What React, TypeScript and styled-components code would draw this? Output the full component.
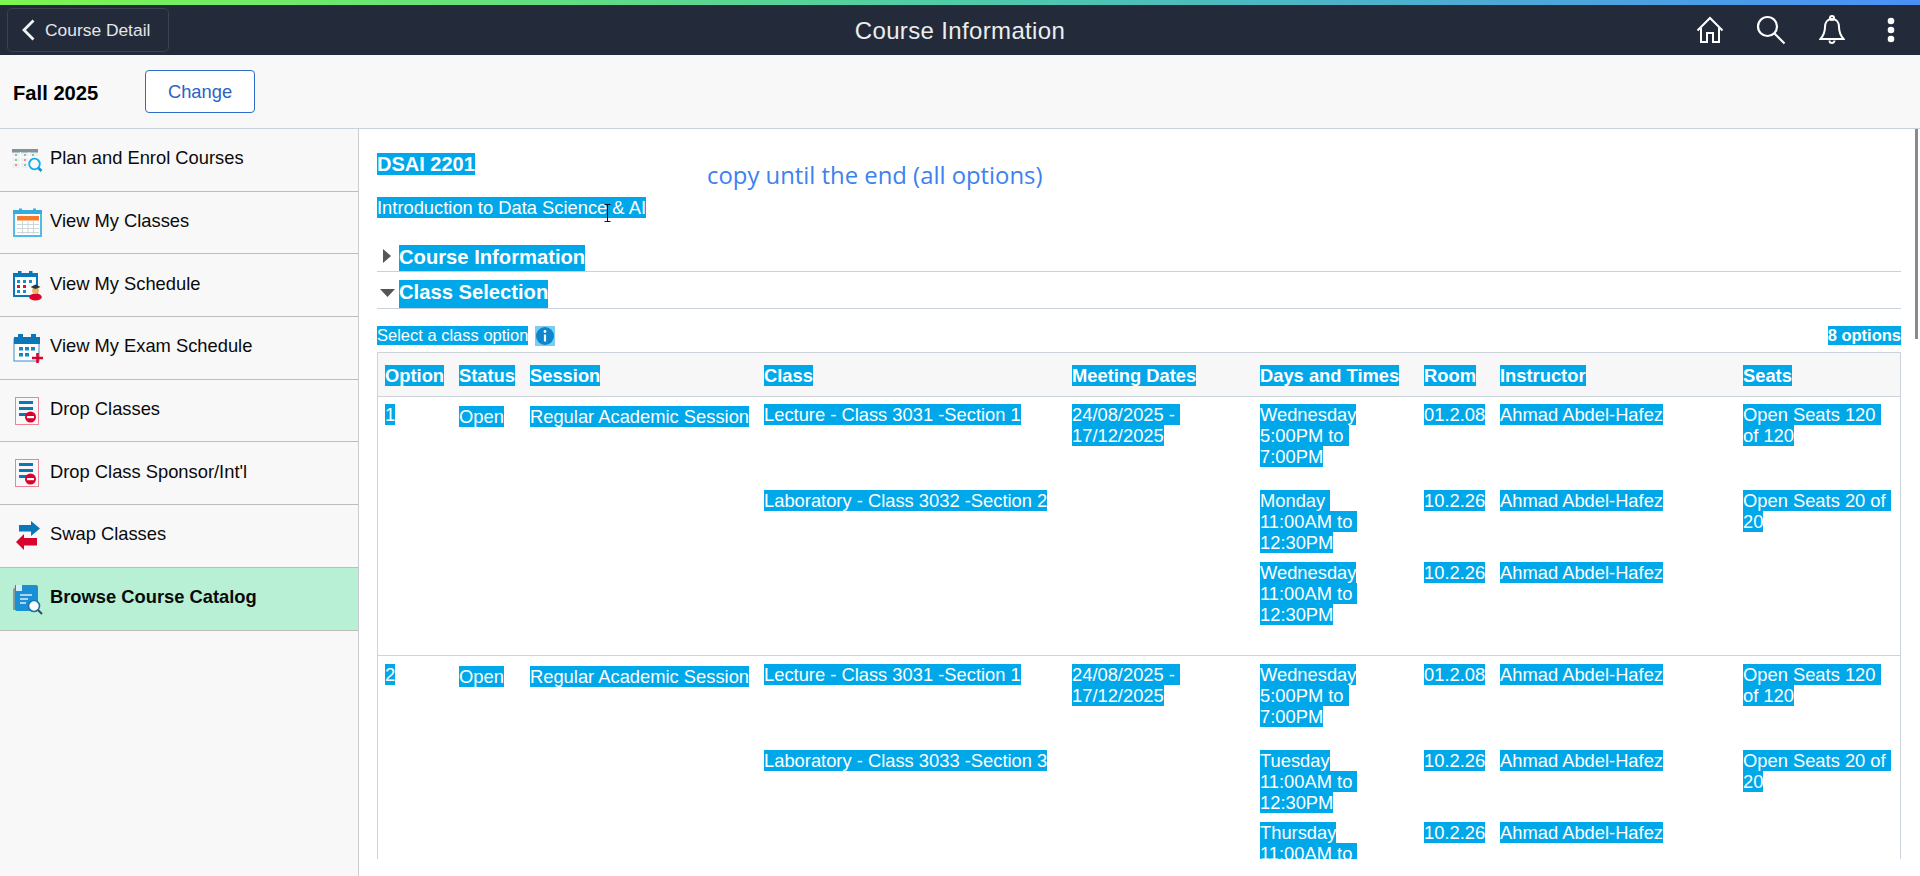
import React from "react";
import styled, { createGlobalStyle } from "styled-components";

const Global = createGlobalStyle`
  html, body { margin: 0; padding: 0; height: 100%; overflow: hidden; background: #fff; }
  body { font-family: "Liberation Sans", Arial, sans-serif; }
  * { box-sizing: border-box; }
`;

const Page = styled.div`
  width: 1920px; height: 876px; display: flex; flex-direction: column; overflow: hidden;
`;
const Accent = styled.div`
  height: 5px; flex: none;
  background: linear-gradient(90deg, #7cf64f 0%, #4ecba8 50%, #4a90f8 100%);
`;
const Header = styled.header`
  height: 50px; flex: none; background: #232b3a;
  display: grid; grid-template-columns: 1fr auto 1fr; align-items: center;
`;
const BackButton = styled.button`
  justify-self: start; margin-left: 7px; width: 162px; height: 44px;
  display: flex; align-items: center; gap: 10px; padding: 0 0 0 13px;
  background: transparent; border: 1px solid #3b4351; border-radius: 5px;
  color: #e4e6e9; font: 17.4px "Liberation Sans", Arial, sans-serif;
`;
const Title = styled.h1`
  margin: 0; padding-top: 1px; font: 400 24px "Liberation Sans", Arial, sans-serif; letter-spacing: .35px; color: #eceded;
`;
const HeaderIcons = styled.div`
  justify-self: end; display: flex; align-items: center;
`;
const HeaderIcon = styled.span<{ $w: number }>`
  display: flex; justify-content: center; width: ${p => p.$w}px;
`;
const SubBar = styled.div`
  height: 74px; flex: none; background: #f8f8f8; border-bottom: 1px solid #c9d2dc;
  display: flex; align-items: center; padding-left: 13px;
`;
const Term = styled.div`
  width: 132px; font-weight: 700; font-size: 20.2px; color: #000; margin-top: 4px;
`;
const ChangeButton = styled.button`
  width: 110px; height: 43px; background: #fff; border: 1px solid #2f6bc9; border-radius: 4px;
  color: #2d62c4; font: 18.33px "Liberation Sans", Arial, sans-serif; padding: 0;
`;
const Body = styled.div`
  flex: 1; display: flex; min-height: 0; position: relative;
`;
const Sidebar = styled.nav`
  width: 359px; flex: none; background: #f8f8f8; border-right: 1px solid #c9ccd0;
`;
const NavRow = styled.div<{ $active?: boolean }>`
  height: 62.7px; display: flex; align-items: center; padding-left: 11px; gap: 7px;
  border-bottom: 1px solid #bdbdbd;
  background: ${p => (p.$active ? "#b7f0d5" : "transparent")};
  font-size: 18.33px; font-weight: ${p => (p.$active ? 700 : 400)}; color: #0a0a0a;
`;
const NavLabel = styled.span`
  margin-bottom: 3px;
`;
const Main = styled.main`
  flex: 1; height: 730px; overflow: hidden; padding: 24px 19px 0 18px; position: relative; background: #fff;
`;
const Mark = styled.span`
  background: #00a8ea; color: #fff; white-space: pre;
`;
const CourseCode = styled.div`
  font-size: 20px; font-weight: 700; line-height: 23px;
`;
const CourseName = styled.div`
  position: relative; font-size: 18.33px; line-height: 21px; margin-top: 21px; margin-bottom: 27px;
`;
const IBeam = styled.svg`
  position: absolute; left: 227px; top: 7px;
`;
const Note = styled.div`
  position: absolute; left: 348px; top: 29px;
  font: 23.87px "Open Sans", sans-serif; color: #3b82f0; white-space: nowrap;
`;
const SectionHead = styled.div<{ $h: number; $mb: number }>`
  height: ${p => p.$h}px; margin-bottom: ${p => p.$mb}px; border-bottom: 1px solid #c9d2dc;
  display: flex; font-size: 20.2px; font-weight: 700; line-height: 24px;
`;
const Caret = styled.span`
  width: 22px; flex: none; display: flex; justify-content: center; align-items: flex-start;
  padding: 4px 2px 0 0;
`;
const InfoLine = styled.div`
  display: flex; justify-content: space-between; align-items: flex-start; height: 26px;
  font-size: 16.5px; line-height: 19px;
`;
const InfoLeft = styled.span`
  display: flex; align-items: flex-start; gap: 7px;
`;
const InfoChip = styled.span`
  display: flex; background: #7ccdf0; width: 20px; height: 20px;
`;
const Strong = styled(Mark)`
  font-weight: 700;
`;
const Table = styled.div`
  border: 1px solid #ccd3db; border-bottom: none;
`;
const cols = "74px 71px 234px 308px 188px 164px 76px 243px 1fr";
const HeadRow = styled.div`
  display: grid; grid-template-columns: ${cols}; padding: 12px 0 0 7px; height: 44px;
  background: #f7f7f7; border-bottom: 1px solid #ccd3db;
  font-size: 18.33px; font-weight: 700; line-height: 21px;
`;
const OptionRow = styled.div<{ $pt: number }>`
  display: grid; grid-template-columns: ${cols}; grid-template-rows: 86px 72px auto;
  padding: ${p => p.$pt}px 0 30px 7px;
  font-size: 18.33px; line-height: 21px;
  & + & { border-top: 1px solid #ccd3db; }
`;
const Cell = styled.div<{ $col: number; $row?: number; $low?: boolean }>`
  grid-column: ${p => p.$col};
  grid-row: ${p => p.$row ?? 1};
  margin-top: ${p => (p.$low ? 2 : 0)}px;
`;
const Thumb = styled.div`
  position: absolute; right: 2px; top: 0; width: 3px; height: 210px; background: #8a8a8a;
`;

const T = (p: { children: string; col: number; row?: number; low?: boolean }) => (
  <Cell $col={p.col} $row={p.row} $low={p.low}><Mark>{p.children}</Mark></Cell>
);

const Plan = () => (
  <svg width="32" height="32" viewBox="0 0 32 32">
    <rect x="1" y="5" width="26" height="19" fill="#eef0f2" />
    <rect x="1" y="5" width="26" height="3.5" fill="#84909c" />
    <path d="M9.5 8v16M18 8v16" stroke="#fff" />
    <path d="M1 13h26M1 18h26" stroke="#fff" />
    <path d="M4 11h2M13 11h2M21 11h2M4 16h2" stroke="#5cc46a" strokeWidth="1.4" />
    <path d="M13 16h2M4 21h2" stroke="#f08aa8" strokeWidth="2" />
    <path d="M13 21h2" stroke="#5cc46a" strokeWidth="1.4" />
    <circle cx="23.5" cy="20" r="5.3" fill="#f8f8f8" stroke="#12aef0" strokeWidth="1.8" />
    <path d="M27.5 24l3 3" stroke="#0a9ad8" strokeWidth="2.6" />
  </svg>
);
const Classes = () => (
  <svg width="32" height="32" viewBox="0 0 32 32">
    <rect x="3" y="4" width="27" height="25" fill="#fff" stroke="#52bbe8" strokeWidth="2" />
    <rect x="2" y="3" width="29" height="4" fill="#35ace0" />
    <rect x="8" y="1.5" width="3" height="4" fill="#35ace0" />
    <rect x="22" y="1.5" width="3" height="4" fill="#35ace0" />
    <rect x="6" y="9" width="22" height="4.5" fill="#f47c2a" />
    <path d="M6 17.5h22M6 21.5h22M6 25.5h22M11.5 14v13M17 14v13M22.5 14v13" stroke="#cfd6da" strokeWidth="1" />
  </svg>
);
const Schedule = () => (
  <svg width="32" height="32" viewBox="0 0 32 32">
    <rect x="3" y="5" width="23" height="22" fill="#fff" stroke="#0a78b8" strokeWidth="2" />
    <rect x="2" y="4" width="25" height="4" fill="#0a78b8" />
    <rect x="7" y="2" width="3.5" height="5" fill="#0a78b8" />
    <rect x="18" y="2" width="3.5" height="5" fill="#0a78b8" />
    <g fill="#1590d0">
      <rect x="6" y="11" width="3" height="3" /><rect x="12" y="11" width="3" height="3" /><rect x="18" y="11" width="3" height="3" />
      <rect x="6" y="21" width="3" height="3" /><rect x="12" y="21" width="3" height="3" />
    </g>
    <g fill="#e0103a"><rect x="6" y="16" width="3" height="3" /><rect x="12" y="16" width="3" height="3" /></g>
    <ellipse cx="24.5" cy="28" rx="6.3" ry="3.6" fill="#d8042e" />
    <circle cx="24.5" cy="21.5" r="3.4" fill="#e8b466" />
    <path d="M19.5 18l5-2.5 5 2.5-5 2z" fill="#2a3440" />
  </svg>
);
const Exam = () => (
  <svg width="32" height="32" viewBox="0 0 32 32">
    <rect x="3" y="7" width="25" height="22" fill="#fff" stroke="#3a8fc4" strokeWidth="1" />
    <rect x="3" y="5" width="26" height="7" fill="#0a78b8" />
    <rect x="7" y="2" width="5" height="5" fill="#0a78b8" />
    <rect x="20" y="2" width="5" height="5" fill="#0a78b8" />
    <g fill="#1586c8">
      <rect x="8" y="15" width="4" height="3.5" /><rect x="14" y="15" width="4" height="3.5" /><rect x="20" y="15" width="4" height="3.5" />
      <rect x="8" y="21" width="4" height="3.5" /><rect x="14" y="21" width="4" height="3.5" />
    </g>
    <path d="M21 26h11M26.5 21v10" stroke="#d8042e" strokeWidth="2.6" />
  </svg>
);
const Drop = () => (
  <svg width="32" height="32" viewBox="0 0 32 32">
    <rect x="4.5" y="2.5" width="23" height="27" fill="none" stroke="#e0103a" strokeWidth="1" strokeDasharray="1 1" />
    <rect x="8" y="6" width="14" height="3" fill="#0a78b8" />
    <rect x="8" y="12" width="14" height="3" fill="#0a78b8" />
    <rect x="8" y="18" width="14" height="3" fill="#0a78b8" />
    <circle cx="19.5" cy="22" r="5.5" fill="#d8042e" />
    <rect x="16" y="21" width="7" height="2.2" fill="#fff" />
  </svg>
);
const Swap = () => (
  <svg width="32" height="32" viewBox="0 0 32 32">
    <path d="M8 5h12V1l9 7.5-9 7.5v-4.500H8z" fill="#0a78b8" />
    <path d="M25 17H12v-4l-8 8 8 8v-4.500h13z" fill="#d8042e" transform="translate(1 1)" />
  </svg>
);
const Browse = () => (
  <svg width="32" height="32" viewBox="0 0 32 32">
    <path d="M2 6l5-4v25H2z" fill="#8b98a4" />
    <path d="M4 2h21a2 2 0 0 1 2 2v22a2 2 0 0 1-2 2H6a2 2 0 0 1-2-2z" fill="#1a8fd6" />
    <path d="M5 2h6v6H5z" fill="#d8eef8" />
    <path d="M9 12h12M9 16h8M9 20h6" stroke="#d8eef8" strokeWidth="1.6" />
    <circle cx="23" cy="23" r="5.500" fill="#fff" stroke="#1676b0" strokeWidth="1.6" />
    <path d="M27 27l4 4" stroke="#3d4650" strokeWidth="2" />
  </svg>
);

const nav = [
  { label: "Plan and Enrol Courses", Icon: Plan },
  { label: "View My Classes", Icon: Classes },
  { label: "View My Schedule", Icon: Schedule },
  { label: "View My Exam Schedule", Icon: Exam },
  { label: "Drop Classes", Icon: Drop },
  { label: "Drop Class Sponsor/Int'l", Icon: Drop },
  { label: "Swap Classes", Icon: Swap },
  { label: "Browse Course Catalog", Icon: Browse, active: true },
];

const heads = ["Option", "Status", "Session", "Class", "Meeting Dates", "Days and Times", "Room", "Instructor", "Seats"];
const who = "Ahmad Abdel-Hafez";

const options = [
  { n: "1", pt: 7, lab: "Laboratory - Class 3032 -Section 2", d1: "Monday \n11:00AM to \n12:30PM", d2: "Wednesday\n11:00AM to \n12:30PM" },
  { n: "2", pt: 8, lab: "Laboratory - Class 3033 -Section 3", d1: "Tuesday\n11:00AM to \n12:30PM", d2: "Thursday\n11:00AM to \n12:30PM" },
];

export default function App() {
  return (
    <Page>
      <Global />
      <Accent />
      <Header>
        <BackButton>
          <svg width="14" height="22" viewBox="0 0 14 22"><path d="M12.500 1.500L3 11l9.500 9.500" fill="none" stroke="#f2f3f4" strokeWidth="2.800" /></svg>
          Course Detail
        </BackButton>
        <Title>Course Information</Title>
        <HeaderIcons>
          <HeaderIcon $w={61}>
            <svg width="28" height="28" viewBox="0 0 28 28" fill="none" stroke="#fff" strokeWidth="2"><path d="M1.500 14.500L14 2l12.500 12.500M5 12v14h6v-9h6v9h6V12" /></svg>
          </HeaderIcon>
          <HeaderIcon $w={61}>
            <svg width="30" height="30" viewBox="0 0 30 30" fill="none" stroke="#fff" strokeWidth="2.200"><circle cx="11.500" cy="11.500" r="9.500" /><path d="M18.500 18.500l10 10" /></svg>
          </HeaderIcon>
          <HeaderIcon $w={61}>
            <svg width="26" height="30" viewBox="0 0 26 30" fill="none" stroke="#fff" strokeWidth="2"><circle cx="13" cy="3" r="2" /><path d="M13 4c-5 0-7 4-7 8 0 6-2 9-4.500 12h23c-2.500-3-4.500-6-4.500-12 0-4-2-8-7-8zM10.500 25.500a2.500 2.500 0 0 0 5 0" /></svg>
          </HeaderIcon>
          <HeaderIcon $w={58}>
            <svg width="8" height="26" viewBox="0 0 8 26" fill="#fff"><circle cx="4" cy="4" r="3.300" /><circle cx="4" cy="13" r="3.300" /><circle cx="4" cy="22" r="3.300" /></svg>
          </HeaderIcon>
        </HeaderIcons>
      </Header>
      <SubBar>
        <Term>Fall 2025</Term>
        <ChangeButton>Change</ChangeButton>
      </SubBar>
      <Body>
        <Sidebar>
          {nav.map(({ label, Icon, active }) => (
            <NavRow key={label} $active={active}>
              <Icon />
              <NavLabel>{label}</NavLabel>
            </NavRow>
          ))}
        </Sidebar>
        <Main>
          <Note>copy until the end (all options)</Note>
          <CourseCode><Mark>DSAI 2201</Mark></CourseCode>
          <CourseName>
            <Mark>Introduction to Data Science &amp; AI</Mark>
            <IBeam width="7" height="18" viewBox="0 0 7 18"><path d="M.500.500h6M3.500.500v17M.500 17.500h6" stroke="#111" fill="none" /></IBeam>
          </CourseName>
          <SectionHead $h={27} $mb={8}>
            <Caret><svg width="8" height="14" viewBox="0 0 8 14"><path d="M0 0l8 7-8 7z" fill="#555" /></svg></Caret>
            <Mark>Course Information</Mark>
          </SectionHead>
          <SectionHead $h={29} $mb={17}>
            <Caret><svg width="15" height="16" viewBox="0 0 15 16"><path d="M0 5h15l-7.500 8z" fill="#555" /></svg></Caret>
            <Mark>Class Selection</Mark>
          </SectionHead>
          <InfoLine>
            <InfoLeft>
              <Mark>Select a class option</Mark>
              <InfoChip>
                <svg width="20" height="20" viewBox="0 0 20 20">
                  <circle cx="10" cy="10" r="9" fill="#0f86cc" />
                  <path d="M10 8.500v7" stroke="#fff" strokeWidth="2.200" />
                  <circle cx="10" cy="5.500" r="1.400" fill="#fff" />
                </svg>
              </InfoChip>
            </InfoLeft>
            <Strong>8 options</Strong>
          </InfoLine>
          <Table>
            <HeadRow>
              {heads.map(h => <div key={h}><Mark>{h}</Mark></div>)}
            </HeadRow>
            {options.map(o => (
              <OptionRow key={o.n} $pt={o.pt}>
                <T col={1}>{o.n}</T>
                <T col={2} low>Open</T>
                <T col={3} low>Regular Academic Session</T>
                <T col={4}>Lecture - Class 3031 -Section 1</T>
                <T col={5}>{"24/08/2025 - \n17/12/2025"}</T>
                <T col={6}>{"Wednesday\n5:00PM to \n7:00PM"}</T>
                <T col={7}>01.2.08</T>
                <T col={8}>{who}</T>
                <T col={9}>{"Open Seats 120 \nof 120"}</T>
                <T col={4} row={2}>{o.lab}</T>
                <T col={6} row={2}>{o.d1}</T>
                <T col={7} row={2}>10.2.26</T>
                <T col={8} row={2}>{who}</T>
                <T col={9} row={2}>{"Open Seats 20 of \n20"}</T>
                <T col={6} row={3}>{o.d2}</T>
                <T col={7} row={3}>10.2.26</T>
                <T col={8} row={3}>{who}</T>
              </OptionRow>
            ))}
          </Table>
          <Thumb />
        </Main>
      </Body>
    </Page>
  );
}
